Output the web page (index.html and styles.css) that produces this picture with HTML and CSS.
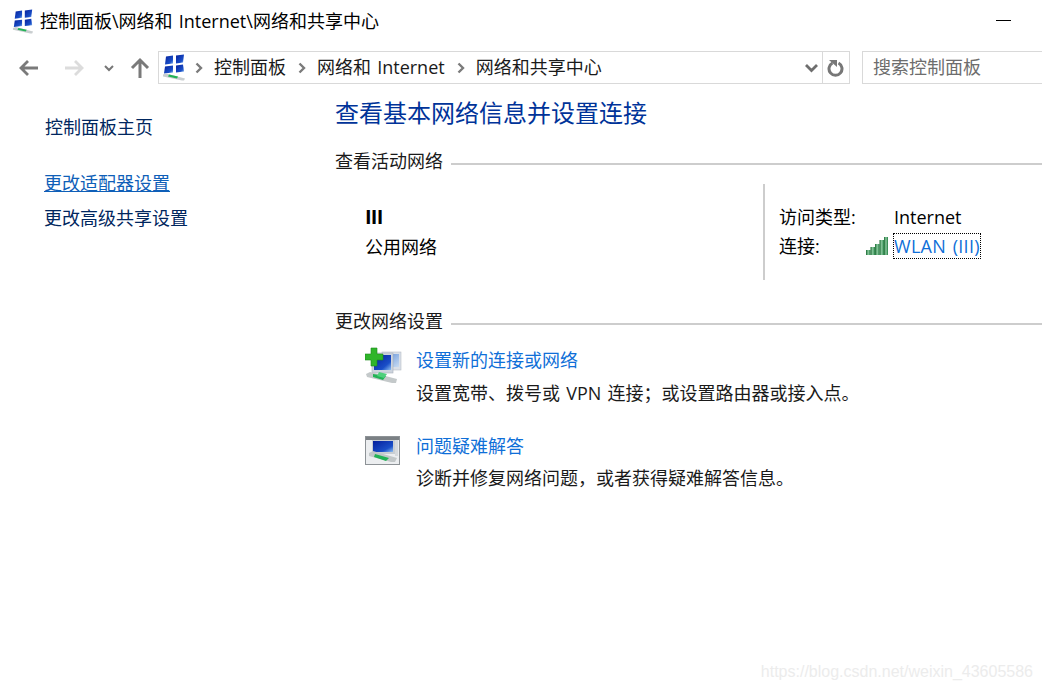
FILE: index.html
```html
<!DOCTYPE html>
<html lang="zh-CN">
<head>
<meta charset="utf-8">
<title>网络和共享中心</title>
<link rel="stylesheet" href="styles.css">
</head>
<body>
<svg class="defs" width="0" height="0" aria-hidden="true">
  <defs>
    <linearGradient id="scr" x1="0" y1="0" x2="1" y2="1"><stop offset="0" stop-color="#06209c"/><stop offset=".7" stop-color="#1a4fc8"/><stop offset="1" stop-color="#8fc0f0"/></linearGradient>
    <linearGradient id="scr2" x1="0" y1="0" x2="1" y2="1"><stop offset="0" stop-color="#5f8fd8"/><stop offset="1" stop-color="#c9dcf2"/></linearGradient>
    <linearGradient id="bar" x1="0" y1="0" x2="1" y2="0"><stop offset="0" stop-color="#17672f"/><stop offset=".5" stop-color="#8ccba0"/><stop offset="1" stop-color="#1f7a3e"/></linearGradient>
    <symbol id="cp" viewBox="0 0 24 26">
      <path d="M4 2l7-1 0 8-8 1z" fill="url(#scr)"/><path d="M14 1l8-1-1 8-7 1z" fill="url(#scr)"/>
      <path d="M3 12l8-1 0 7-9 1z" fill="url(#scr)"/><path d="M14 11l7-1 1 7-8 1z" fill="url(#scr)"/>
      <path d="M1 20l3-1 19 5-1 2-2 0-19-4z" fill="#c9ced0"/><path d="M7 20l9 2-1 2-9-2z" fill="#22b356"/>
    </symbol>
  </defs>
</svg>
<div class="window">
  <header class="titlebar">
    <svg class="cp-title"><use href="#cp"/></svg>
    <span class="title-text">控制面板\网络和 Internet\网络和共享中心</span>
    <span class="minimize"></span>
  </header>
  <nav class="navbar">
    <svg class="nav-btn" width="22" height="20" viewBox="0 0 22 20"><path d="M20 10H3M10 3l-7 7 7 7" fill="none" stroke="#7a7a7a" stroke-width="2.800"/></svg>
    <svg class="nav-btn fwd" width="22" height="20" viewBox="0 0 22 20"><path d="M2 10h17M12 3l7 7-7 7" fill="none" stroke="#dcdcdc" stroke-width="2.800"/></svg>
    <svg class="nav-drop" width="10" height="8" viewBox="0 0 10 8"><path d="M1 2l4 4 4-4" fill="none" stroke="#777" stroke-width="2"/></svg>
    <svg class="nav-up" width="20" height="22" viewBox="0 0 20 22"><path d="M10 21V3M2 11l8-8 8 8" fill="none" stroke="#7a7a7a" stroke-width="3"/></svg>
    <div class="address">
      <svg class="cp-addr"><use href="#cp"/></svg>
      <svg class="crumb-sep" width="8" height="12" viewBox="0 0 8 12"><path d="M1.500 1.500L6 6l-4.500 4.500" fill="none" stroke="#7b7b7b" stroke-width="2.400"/></svg>
      <span class="crumb">控制面板</span>
      <svg class="crumb-sep" width="8" height="12" viewBox="0 0 8 12"><path d="M1.500 1.500L6 6l-4.500 4.500" fill="none" stroke="#7b7b7b" stroke-width="2.400"/></svg>
      <span class="crumb">网络和 Internet</span>
      <svg class="crumb-sep" width="8" height="12" viewBox="0 0 8 12"><path d="M1.500 1.500L6 6l-4.500 4.500" fill="none" stroke="#7b7b7b" stroke-width="2.400"/></svg>
      <span class="crumb">网络和共享中心</span>
      <svg class="addr-drop" width="15" height="10" viewBox="0 0 15 10"><path d="M2 2l5.500 5.500L13 2" fill="none" stroke="#6e6e6e" stroke-width="2.800"/></svg>
      <div class="refresh">
        <svg width="18" height="20" viewBox="0 0 18 20"><path d="M5.500 5a6.500 6.500 0 1 0 6 0" fill="none" stroke="#777" stroke-width="3"/><path d="M2 2h8v7z" fill="#777"/></svg>
      </div>
    </div>
    <div class="search">搜索控制面板</div>
  </nav>
  <div class="main">
    <aside class="sidebar">
      <a class="side-home">控制面板主页</a>
      <a class="side-active">更改适配器设置</a>
      <a class="side-link">更改高级共享设置</a>
    </aside>
    <section class="content">
      <h1 class="heading">查看基本网络信息并设置连接</h1>
      <div class="section-title"><span>查看活动网络</span><i class="rule"></i></div>
      <div class="network">
        <div class="net-left">
          <div class="net-name">III</div>
          <div class="net-type">公用网络</div>
        </div>
        <div class="net-right">
          <div class="net-row">
            <span class="net-label">访问类型:</span><span class="net-value">Internet</span>
          </div>
          <div class="net-row">
            <span class="net-label">连接:</span>
            <svg class="signal" width="22" height="19" viewBox="0 0 22 19">
              <rect x="0" y="14" width="4.500" height="5" fill="url(#bar)"/>
              <rect x="4.500" y="11" width="4.500" height="8" fill="url(#bar)"/>
              <rect x="9" y="8" width="4.500" height="11" fill="url(#bar)"/>
              <rect x="13.500" y="4" width="4.500" height="15" fill="url(#bar)"/>
              <rect x="18" y="1" width="4" height="18" fill="url(#bar)"/>
            </svg>
            <a class="wlan">WLAN (III)</a>
          </div>
        </div>
      </div>
      <div class="section-title second"><span>更改网络设置</span><i class="rule"></i></div>
      <div class="task">
        <svg class="task-icon" width="37" height="38" viewBox="0 0 37 38">
          <rect x="17" y="5" width="19" height="18" fill="#d9dfe8" stroke="#b8bec6" stroke-width=".6"/><rect x="19" y="7" width="15" height="13" fill="url(#scr2)"/>
          <rect x="7" y="6" width="21" height="20" fill="#cdd4de" stroke="#a9b0ba" stroke-width=".6"/><rect x="9" y="8" width="17" height="15" fill="url(#scr)"/>
          <path d="M6 1h6v6h6v6h-6v6H6v-6H0V7h6z" fill="#2fb52a" stroke="#1c8a1c" stroke-width=".6"/>
          <path d="M1 27l4-2 27 7-1 4-4 0-25-6z" fill="#c4c9ca"/>
          <path d="M8 27l13 2-3 4-10-3z" fill="#22b356"/><path d="M14 25l8 2-3 4-7-2z" fill="#4ed07c"/>
        </svg>
        <div class="task-body">
          <a class="task-link">设置新的连接或网络</a>
          <p class="task-desc">设置宽带、拨号或 VPN 连接；或设置路由器或接入点。</p>
        </div>
      </div>
      <div class="task">
        <svg class="task-icon trouble" width="36" height="30" viewBox="0 0 36 30">
          <rect x=".5" y=".5" width="34" height="28" fill="#eceef0" stroke="#8d9296"/>
          <rect x="1" y="1" width="33" height="3" fill="#7b8084"/>
          <rect x="7" y="4" width="23" height="14" fill="#c9ced2"/>
          <rect x="8" y="5" width="20" height="11" fill="url(#scr)"/>
          <rect x="30" y="4" width="3" height="16" fill="#d6dadd"/>
          <path d="M4 17l4-2 24 7-2 4-4 0-22-6z" fill="#c2c7c8"/>
          <path d="M10 18l14 4-3 3-12-4z" fill="#22b356"/>
        </svg>
        <div class="task-body">
          <a class="task-link">问题疑难解答</a>
          <p class="task-desc">诊断并修复网络问题，或者获得疑难解答信息。</p>
        </div>
      </div>
    </section>
  </div>
  <div class="watermark">https://blog.csdn.net/weixin_43605586</div>
</div>
</body>
</html>
```
FILE: styles.css
```css
* { box-sizing: border-box; }
html, body { margin: 0; padding: 0; background: #fff; }
body {
  width: 1042px; height: 690px; overflow: hidden;
  font-family: "Open Sans", "Noto Sans CJK SC", sans-serif;
  font-size: 18px; line-height: 24px; color: #000; word-spacing: 1.500px;
}
.defs { position: absolute; }
.window { position: relative; width: 1042px; height: 690px; overflow: hidden; }
.titlebar { display: flex; align-items: center; height: 42px; padding-left: 12px; }
.cp-title { width: 22px; height: 25px; margin-right: 6px; }
.title-text { flex: 1; }
.minimize { width: 15px; height: 1px; background: #000; margin-right: 31px; margin-top: -1px; }
.navbar { display: flex; align-items: center; height: 33px; margin-top: 9px; }
.nav-btn { margin-left: 18px; }
.nav-btn.fwd { margin-left: 23px; }
.nav-drop { margin-left: 19px; }
.nav-up { margin-left: 16px; }
.address {
  display: flex; align-items: center; width: 692px; height: 33px; margin-left: 8px;
  border: 1px solid #d9d9d9; padding-left: 3px; color: #1a1a1a;
}
.cp-addr { width: 24px; height: 27px; }
.crumb-sep { margin-left: 9px; margin-right: 11px; }
.crumb + .crumb-sep { margin-left: 12px; margin-right: 11px; }
.crumb { white-space: nowrap; padding-bottom: 1px; }
.addr-drop { margin-left: auto; margin-right: 3px; }
.refresh {
  display: flex; align-items: center; justify-content: center;
  width: 27px; height: 31px; border-left: 1px solid #d9d9d9;
}
.search {
  width: 180px; height: 33px; margin-left: 12px; padding-left: 10px;
  border: 1px solid #d9d9d9; border-right: 0; color: #6d6d6d; line-height: 31px;
}
.main { display: flex; }
.sidebar { display: flex; flex-direction: column; width: 335px; padding-left: 44px; }
.sidebar a { display: block; }
.side-home { margin-top: 31px; padding-left: 1px; color: #00265e; }
.side-active { margin-top: 32px; color: #0f5fb8; text-decoration: underline; }
.side-link { margin-top: 11px; color: #00265e; }
.content { flex: 1; min-width: 0; }
.heading { margin: 13px 0 0; font-size: 24px; line-height: 32px; font-weight: 400; color: #003399; }
.section-title { display: flex; align-items: center; gap: 8px; margin-top: 20px; color: #1a1a1a; }
.section-title.second { margin-top: 29px; }
.rule { flex: 1; height: 2px; background: #cdcdcd; margin-top: 5px; }
.network { display: flex; height: 96px; margin-top: 11px; }
.net-left { width: 430px; padding: 21px 0 0 30px; border-right: 2px solid #cdcdcd; }
.net-name { font-size: 20px; font-weight: 700; line-height: 24px; letter-spacing: -.800px; }
.net-type { margin-top: 6px; }
.net-right { padding: 21px 0 0 14px; }
.net-row { display: flex; align-items: center; height: 24px; margin-bottom: 5px; }
.net-label { width: 115px; }
.net-row .net-label:has(+ .signal) { width: 87px; }
.signal { margin-right: 6px; margin-top: -2px; }
.wlan { color: #0f6fd8; outline: 1px dotted #000; letter-spacing: .300px; }
.task { display: flex; align-items: flex-start; padding-left: 30px; }
.task + .task { margin-top: 28px; }
.task + .task .task-desc { margin-top: 8px; }
.section-title.second + .task { margin-top: 14px; }
.task-icon { flex: none; }
.task-icon.trouble { margin-top: 3px; }
.task-body { margin-left: 14px; margin-top: 1px; }
.task-icon.trouble + .task-body { margin-left: 15px; }
.task-link { display: block; color: #0f6fd8; }
.task-desc { margin: 9px 0 0; color: #1a1a1a; }
.watermark {
  position: absolute; right: 9px; top: 662px;
  font-family: "Liberation Sans", sans-serif; font-size: 16px; line-height: 20px; color: #ececec; word-spacing: 0;
}
```
